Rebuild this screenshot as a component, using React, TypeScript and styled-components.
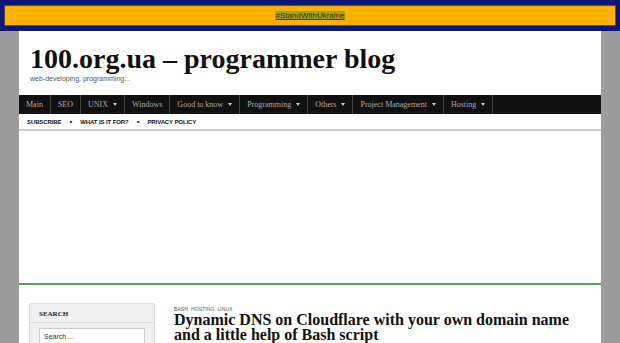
import React from "react";
import styled, { createGlobalStyle } from "styled-components";

const GlobalStyle = createGlobalStyle`
  html, body {
    margin: 0;
    padding: 0;
  }
  body {
    background: #9c9c9c;
    overflow: hidden;
  }
`;

const menu = [
  { label: "Main" },
  { label: "SEO" },
  { label: "UNIX", sub: true },
  { label: "Windows" },
  { label: "Good to know", sub: true },
  { label: "Programming", sub: true },
  { label: "Others", sub: true },
  { label: "Project Management", sub: true },
  { label: "Hosting", sub: true },
];

const App: React.FC = () => {
  return (
    <>
      <GlobalStyle />
      <Banner>
        <BannerInner>
          <BannerLink>#StandWithUkraine</BannerLink>
        </BannerInner>
      </Banner>
      <Page>
        <Header>
          <SiteTitle>100.org.ua – programmer blog</SiteTitle>
          <Tagline>web-developing, programming...</Tagline>
        </Header>
        <Nav>
          {menu.map((m) => (
            <NavItem key={m.label}>
              {m.label}
              {m.sub && <Caret />}
            </NavItem>
          ))}
        </Nav>
        <SubNav>
          <SubLink>SUBSCRIBE</SubLink>
          <Dot>•</Dot>
          <SubLink>WHAT IS IT FOR?</SubLink>
          <Dot>•</Dot>
          <SubLink>PRIVACY POLICY</SubLink>
        </SubNav>
        <AdArea />
        <Content>
          <Sidebar>
            <Widget>
              <WidgetTitle>SEARCH</WidgetTitle>
              <WidgetBody>
                <SearchInput placeholder="Search ..." />
              </WidgetBody>
            </Widget>
          </Sidebar>
          <Main>
            <Cats>BASH, HOSTING, LINUX</Cats>
            <PostTitle>
              Dynamic DNS on Cloudflare with your own domain name and a little
              help of Bash script
            </PostTitle>
          </Main>
        </Content>
      </Page>
    </>
  );
};

export default App;

const Banner = styled.div`
  background: #0b1877;
  padding: 5px 4px 5px 4px;
`;

const BannerInner = styled.div`
  background: #ffb000;
  border: 1px solid #5b5420;
  height: 19px;
  display: flex;
  align-items: center;
  justify-content: center;
`;

const BannerLink = styled.span`
  font-family: "Liberation Sans", Arial, sans-serif;
  font-size: 8px;
  color: #2d3a10;
  text-decoration: underline;
  background: #a9a020;
  padding: 0 1px;
`;

const Page = styled.div`
  width: 582px;
  margin: 0 auto;
  background: #fff;
`;

const Header = styled.div`
  padding: 13px 11px 13px;
`;

const SiteTitle = styled.h1`
  margin: 0;
  font-family: "Liberation Serif", "Times New Roman", serif;
  font-weight: 700;
  font-size: 28px;
  line-height: 30px;
  color: #111;
`;

const Tagline = styled.div`
  font-family: "Liberation Sans", Arial, sans-serif;
  font-size: 7px;
  color: #555;
  margin-top: 1px;
`;

const Nav = styled.div`
  display: flex;
  background: #111;
  height: 19px;
`;

const NavItem = styled.div`
  display: flex;
  align-items: center;
  padding: 0 7px;
  font-family: "Liberation Serif", "Times New Roman", serif;
  font-size: 8px;
  color: #aaa;
  border-right: 1px solid #444;
  white-space: nowrap;
`;

const Caret = styled.span`
  width: 0;
  height: 0;
  margin-left: 5px;
  border-left: 2px solid transparent;
  border-right: 2px solid transparent;
  border-top: 3px solid #ccc;
`;

const SubNav = styled.div`
  display: flex;
  align-items: center;
  gap: 8px;
  height: 15px;
  padding: 0 8px;
  border-bottom: 2px solid #ccc;
`;

const SubLink = styled.span`
  font-family: "Liberation Sans", Arial, sans-serif;
  font-weight: 700;
  font-size: 6px;
  color: #111;
  letter-spacing: -0.1px;
`;

const Dot = styled.span`
  font-family: "Liberation Sans", Arial, sans-serif;
  font-size: 8px;
  color: #111;
`;

const AdArea = styled.div`
  height: 152px;
  border-bottom: 2px solid #4ca84c;
`;

const Content = styled.div`
  display: flex;
  padding: 18px 10px 0;
  gap: 19px;
  height: 60px;
`;

const Sidebar = styled.div`
  width: 126px;
`;

const Widget = styled.div`
  background: #efefef;
  border: 1px solid #ddd;
  height: 60px;
`;

const WidgetTitle = styled.div`
  font-family: "Liberation Serif", "Times New Roman", serif;
  font-weight: 700;
  font-size: 7px;
  color: #222;
  padding: 6px 9px 4px;
  border-bottom: 1px solid #ddd;
`;

const WidgetBody = styled.div`
  padding: 5px 9px;
`;

const SearchInput = styled.input`
  display: block;
  box-sizing: border-box;
  width: 106px;
  height: 16px;
  border: 1px solid #ccc;
  background: #fff;
  font-family: "Liberation Sans", Arial, sans-serif;
  font-size: 7px;
  padding: 0 4px;
  outline: none;
  &::placeholder {
    color: #333;
  }
`;

const Main = styled.div`
  flex: 1;
  padding-top: 3px;
`;

const Cats = styled.div`
  font-family: "Liberation Sans", Arial, sans-serif;
  font-size: 5px;
  color: #555;
  letter-spacing: 0.1px;
`;

const PostTitle = styled.h2`
  margin: 0;
  font-family: "Liberation Serif", "Times New Roman", serif;
  font-weight: 700;
  font-size: 16px;
  line-height: 15px;
  color: #111;
  width: 405px;
`;
